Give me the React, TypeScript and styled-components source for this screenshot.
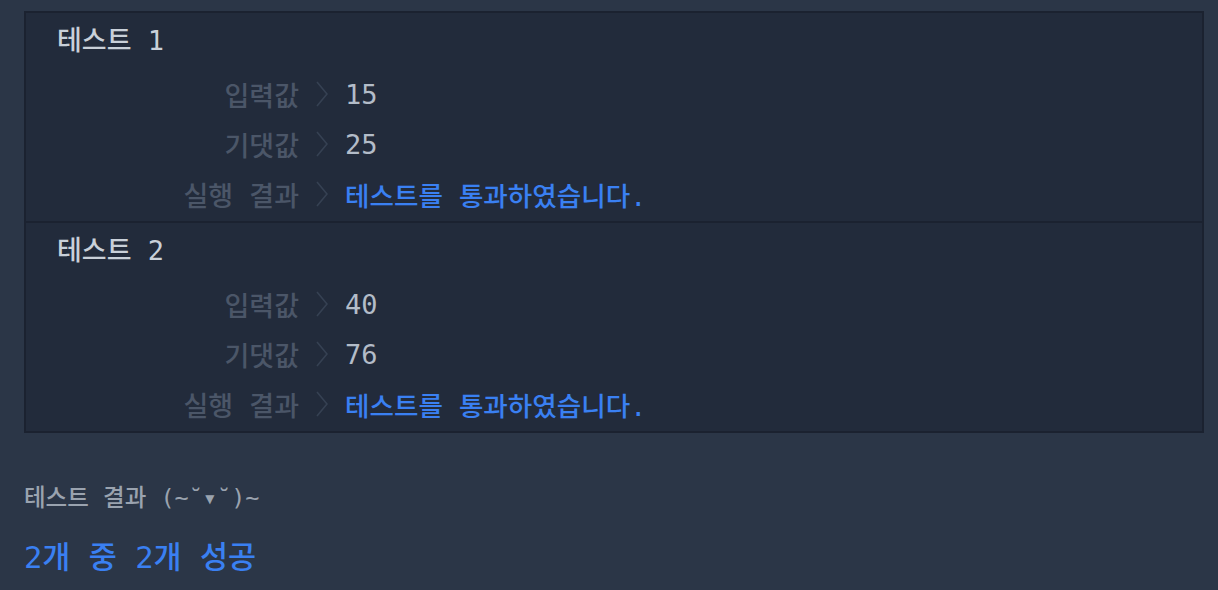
import React from "react";
import styled, { createGlobalStyle } from "styled-components";

const Global = createGlobalStyle`
  html, body {
    margin: 0;
    padding: 0;
    background: #2b3647;
  }
  body {
    font-family: "DejaVu Sans Mono", "Noto Sans CJK KR", monospace;
    font-weight: 500;
  }
`;

const Page = styled.div`
  padding: 11px 14px 0 24px;
`;

const ResultBox = styled.div`
  background: #222b3b;
  border: 2px solid #1b2230;
`;

const Section = styled.section<{ $divider?: boolean }>`
  padding-bottom: 2px;
  border-top: ${(p) => (p.$divider ? "2px solid #1b2230" : "none")};
`;

const Title = styled.div`
  height: 56px;
  line-height: 56px;
  padding-left: 31px;
  font-size: 27px;
  color: #c9d0d9;
  white-space: pre;
`;

const Row = styled.div`
  display: grid;
  grid-template-columns: 273px 46px 1fr;
  align-items: center;
  height: 50px;
`;

const Label = styled.div`
  text-align: right;
  font-size: 27px;
  color: #4b5668;
  white-space: pre;
`;

const Chevron = styled.svg`
  display: block;
  margin-left: 17px;
`;

const Value = styled.div<{ $ok?: boolean }>`
  font-size: ${(p) => (p.$ok ? "26.6px" : "27px")};
  color: ${(p) => (p.$ok ? "#3a80f2" : "#b3bcc8")};
  white-space: pre;
`;

const Heading = styled.div`
  margin-top: 50px;
  height: 30px;
  line-height: 30px;
  font-size: 23.5px;
  color: #9aa3af;
  white-space: pre;
`;

const Summary = styled.div`
  margin-top: 25px;
  height: 40px;
  line-height: 40px;
  font-size: 30.5px;
  color: #3a80f2;
  white-space: pre;
`;

const Arrow = () => (
  <Chevron width="12" height="26" viewBox="0 0 12 26">
    <polyline
      points="1,1 11,13 1,25"
      fill="none"
      stroke="#364153"
      strokeWidth="1.6"
    />
  </Chevron>
);

type Test = { n: number; input: string; expected: string };

const tests: Test[] = [
  { n: 1, input: "15", expected: "25" },
  { n: 2, input: "40", expected: "76" },
];

export default function App() {
  return (
    <>
      <Global />
      <Page>
        <ResultBox>
          {tests.map((t, i) => (
            <Section key={t.n} $divider={i > 0}>
              <Title>테스트 {t.n}</Title>
              <Row>
                <Label>입력값</Label>
                <Arrow />
                <Value>{t.input}</Value>
              </Row>
              <Row>
                <Label>기댓값</Label>
                <Arrow />
                <Value>{t.expected}</Value>
              </Row>
              <Row>
                <Label>실행 결과</Label>
                <Arrow />
                <Value $ok>테스트를 통과하였습니다.</Value>
              </Row>
            </Section>
          ))}
        </ResultBox>
        <Heading>테스트 결과 (~˘▾˘)~</Heading>
        <Summary>2개 중 2개 성공</Summary>
      </Page>
    </>
  );
}
